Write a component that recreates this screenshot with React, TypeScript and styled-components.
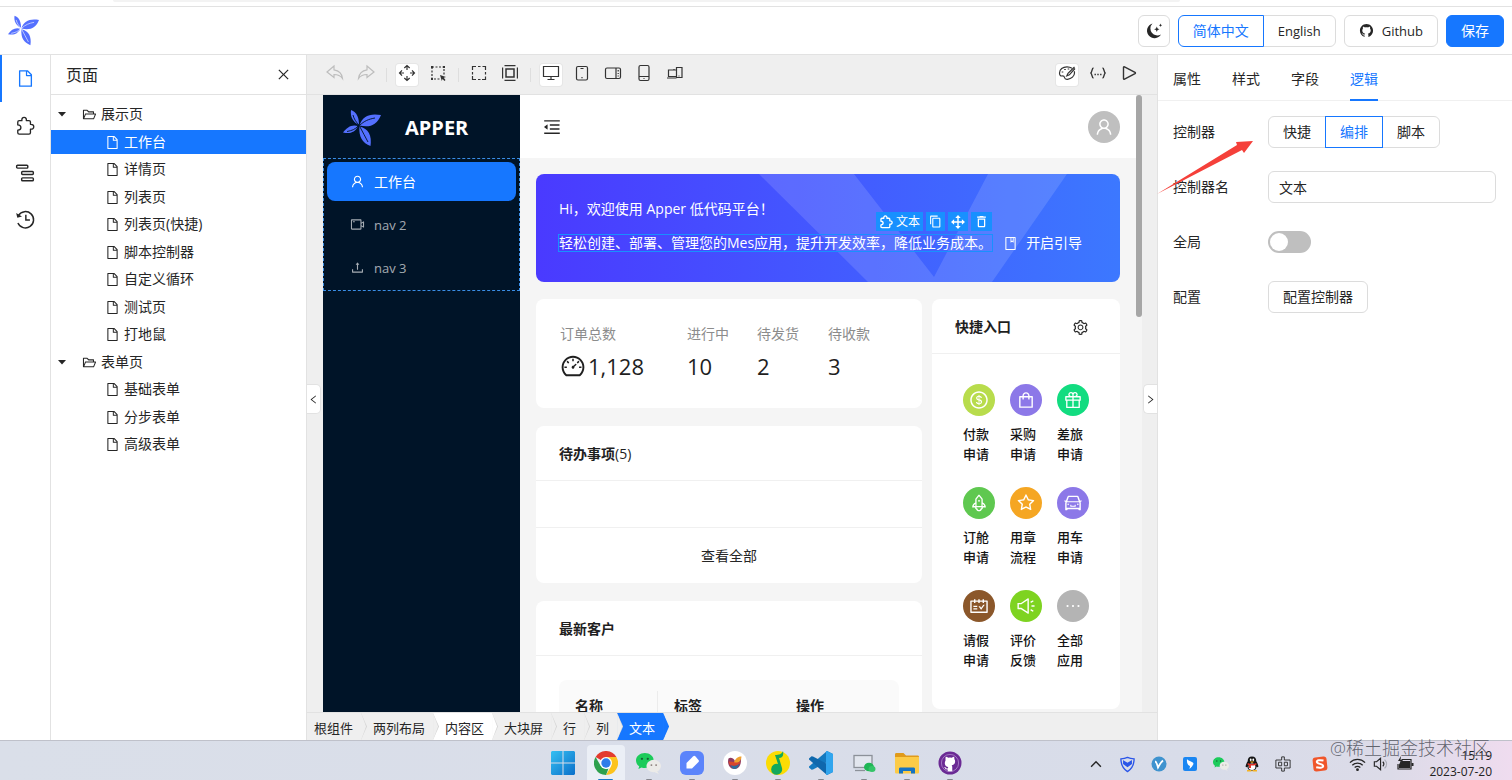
import React from "react";
import styled, { createGlobalStyle, css } from "styled-components";
import {
  AiOutlineBook,
  AiOutlineCar,
  AiOutlineClose,
  AiOutlineDashboard,
  AiOutlineDollar,
  AiOutlineEllipsis,
  AiOutlineFile,
  AiOutlineFolderOpen,
  AiOutlineGift,
  AiOutlineGithub,
  AiOutlineLeft,
  AiOutlineMenuFold,
  AiOutlineRight,
  AiOutlineRocket,
  AiOutlineSchedule,
  AiOutlineSetting,
  AiOutlineShopping,
  AiOutlineSound,
  AiOutlineStar,
  AiOutlineUpload,
  AiOutlineUser,
  AiOutlineVideoCamera,
} from "react-icons/ai";
import { MdContentCopy, MdDeleteOutline } from "react-icons/md";

const blue = "#1677ff";
const line = "#e2e2e2";
const grayBg = "#efefef";

const GlobalStyle = createGlobalStyle`
  *, *::before, *::after { box-sizing: border-box; }
  body {
    margin: 0;
    background: #fff;
    color: #262626;
    font-family: "Open Sans", "Noto Sans CJK SC", sans-serif;
    font-size: 14px;
    line-height: 20px;
  }
  button, input { font: inherit; color: inherit; }
  button { cursor: pointer; padding: 0; }
  ul, ol { list-style: none; margin: 0; padding: 0; }
  h1, h2, p, dl, dd { margin: 0; }
  svg { display: block; flex: none; }
`;

const Shell = styled.div`
  position: relative;
  display: flex;
  flex-direction: column;
  height: 100vh;
  overflow: hidden;
`;

const BrowserEdge = styled.div`
  flex: none;
  height: 7px;
  padding: 0 332px 0 113px;
  border-bottom: 1px solid ${line};
  &::before {
    content: "";
    display: block;
    height: 2px;
    background: #f3f3f3;
    border-radius: 0 0 4px 4px;
  }
`;

/* ---------- header ---------- */

const Header = styled.header`
  flex: none;
  display: flex;
  align-items: center;
  justify-content: space-between;
  height: 48px;
  padding: 0 8px;
  border-bottom: 1px solid ${line};
`;

const HeaderActions = styled.div`
  display: flex;
  gap: 8px;
`;

const Button = styled.button<{ $primary?: boolean; $square?: boolean }>`
  display: flex;
  align-items: center;
  justify-content: center;
  gap: 8px;
  height: 32px;
  padding: 0 ${(p) => (p.$square ? 6 : 14)}px;
  border: 1px solid ${(p) => (p.$primary ? blue : "#dcdcdc")};
  border-radius: 6px;
  background: ${(p) => (p.$primary ? blue : "#fff")};
  color: ${(p) => (p.$primary ? "#fff" : "inherit")};
`;

const Segments = styled.div`
  display: flex;
`;

const Segment = styled.button<{ $active?: boolean }>`
  height: 32px;
  padding: 0 14px;
  border: 1px solid #dcdcdc;
  background: #fff;
  & + & {
    margin-left: -1px;
  }
  &:first-child {
    border-radius: 6px 0 0 6px;
  }
  &:last-child {
    border-radius: 0 6px 6px 0;
  }
  ${(p) =>
    p.$active &&
    css`
      position: relative;
      border-color: ${blue};
      color: ${blue};
    `}
`;

const Latin = styled.span`
  font-size: 13px;
`;

/* ---------- left side ---------- */

const Main = styled.main`
  flex: 1;
  min-height: 0;
  display: flex;
`;

const Rail = styled.nav`
  flex: none;
  width: 51px;
  border-right: 1px solid ${line};
`;

const RailButton = styled.button<{ $active?: boolean }>`
  display: flex;
  align-items: center;
  justify-content: center;
  width: 100%;
  height: 47px;
  border: 0;
  background: none;
  box-shadow: ${(p) => (p.$active ? `inset 2px 0 ${blue}` : "none")};
  color: ${(p) => (p.$active ? blue : "inherit")};
`;

const PagePanel = styled.aside`
  flex: none;
  width: 256px;
  border-right: 1px solid ${line};
`;

const PanelHead = styled.div`
  display: flex;
  align-items: center;
  justify-content: space-between;
  height: 40px;
  padding: 0 15px;
  border-bottom: 1px solid ${line};
`;

const PanelTitle = styled.h2`
  font-size: 16px;
  font-weight: 400;
`;

const IconButton = styled.button`
  display: flex;
  padding: 0;
  border: 0;
  background: none;
`;

const Tree = styled.ul`
  padding-top: 7px;
`;

const TreeItem = styled.li<{ $selected?: boolean; $leaf?: boolean }>`
  display: flex;
  align-items: center;
  height: 24px;
  margin-bottom: 4px;
  padding-left: ${(p) => (p.$leaf ? 54 : 6)}px;
  background: ${(p) => (p.$selected ? blue : "none")};
  color: ${(p) => (p.$selected ? "#fff" : "inherit")};
  &:nth-child(even) {
    margin-bottom: 3px;
  }
`;

const TreeLabel = styled.span`
  padding-left: 4px;
`;

const Caret = styled.svg`
  margin-right: 15px;
`;

/* ---------- canvas ---------- */

const Stage = styled.section`
  position: relative;
  flex: 1;
  min-width: 0;
  display: flex;
  flex-direction: column;
  background: ${grayBg};
`;

const Toolbar = styled.div`
  flex: none;
  display: flex;
  justify-content: space-between;
  align-items: center;
  height: 40px;
  padding: 0 17px;
  border-bottom: 1px solid ${line};
`;

const Tools = styled.div`
  display: flex;
  align-items: center;
  gap: 9px;
`;

const Tool = styled.button<{ $active?: boolean; $muted?: boolean }>`
  display: flex;
  justify-content: center;
  width: 22px;
  height: 22px;
  border: 0;
  border-radius: 3px;
  background: ${(p) => (p.$active ? "#fff" : "none")};
  box-shadow: ${(p) => (p.$active ? "0 0 0 1px #e6e6e6" : "none")};
  color: ${(p) => (p.$muted ? "#bdbdbd" : "#333")};
`;

const ToolDivider = styled.span`
  width: 1px;
  height: 14px;
  background: #dedede;
`;

const Workspace = styled.div`
  flex: 1;
  min-height: 0;
  display: flex;
  padding: 0 15px 0 16px;
`;

const DemoSide = styled.aside`
  flex: none;
  width: 197px;
  background: #001428;
  color: #fff;
`;

const Brand = styled.div`
  display: flex;
  align-items: center;
  gap: 24px;
  height: 63px;
  padding: 2px 0 0 20px;
`;

const BrandName = styled.h1`
  font-size: 20px;
  font-weight: 700;
`;

const DemoMenu = styled.ul`
  display: flex;
  flex-direction: column;
  gap: 4px;
  padding: 3px;
  border: 1px dashed #3a8ee6;
`;

const DemoMenuItem = styled.li<{ $active?: boolean }>`
  display: flex;
  align-items: center;
  gap: 9px;
  height: 39px;
  padding-left: 23px;
  border-radius: 8px;
  background: ${(p) => (p.$active ? blue : "none")};
  color: ${(p) => (p.$active ? "#fff" : "rgba(255, 255, 255, 0.65)")};
`;

const DemoPage = styled.div`
  flex: 1;
  min-width: 0;
  overflow: hidden;
  background: #f5f5f5;
`;

const DemoHeader = styled.div`
  display: flex;
  align-items: center;
  justify-content: space-between;
  height: 63px;
  padding: 0 16px 0 22px;
  background: #fff;
`;

const Round = styled.span<{ $color: string }>`
  display: flex;
  align-items: center;
  justify-content: center;
  width: 32px;
  height: 32px;
  border-radius: 50%;
  background: ${(p) => p.$color};
  color: #fff;
`;

const ScrollTrack = styled.div`
  flex: none;
  width: 6px;
  background: #f5f5f5;
`;

const ScrollThumb = styled.div`
  height: 36%;
  border-radius: 3px;
  background: #a6a6a6;
`;

const DemoBody = styled.div`
  display: grid;
  grid-template-columns: minmax(0, 1fr) 188px;
  gap: 17px 10px;
  align-items: start;
  padding: 16px;
`;

const Banner = styled.section`
  position: relative;
  grid-column: 1 / -1;
  height: 108px;
  padding: 24px 23px;
  overflow: hidden;
  border-radius: 8px;
  background: linear-gradient(90deg, #4a3aff, #3c78ff);
  color: #fff;
`;

const BannerArt = styled.svg`
  position: absolute;
  top: 0;
  right: 0;
`;

const BannerText = styled.p`
  position: relative;
  line-height: 22px;
`;

const BannerRow = styled.div`
  position: relative;
  display: flex;
  align-items: center;
  gap: 11px;
  margin-top: 13px;
`;

const Picked = styled.div`
  position: relative;
  outline: 1px solid #1890ff;
  line-height: 16px;
  white-space: nowrap;
`;

const PickedBar = styled.div`
  position: absolute;
  right: 0;
  bottom: 100%;
  display: flex;
  gap: 3px;
  margin-bottom: 4px;
`;

const PickedAction = styled.button`
  display: flex;
  align-items: center;
  gap: 3px;
  height: 19px;
  padding: 0 3px;
  border: 0;
  background: #1890ff;
  color: #fff;
  font-size: 12px;
`;

const GuideLink = styled.a`
  display: flex;
  align-items: center;
  gap: 8px;
  color: #fff;
  text-decoration: none;
  white-space: nowrap;
`;

const Column = styled.div`
  display: flex;
  flex-direction: column;
  gap: 18px;
`;

const Card = styled.section`
  border-radius: 8px;
  background: #fff;
`;

const CardHead = styled.div`
  display: flex;
  align-items: center;
  justify-content: space-between;
  height: 55px;
  padding: 2px 31px 0 23px;
  border-bottom: 1px solid #f0f0f0;
`;

const CardTitle = styled.h2`
  font-size: 14px;
  font-weight: 700;
  color: #1f1f1f;
`;

const Count = styled.span`
  font-weight: 500;
`;

const Stats = styled.dl`
  display: grid;
  grid-template-columns: 127px 70px 71px 1fr;
  height: 109px;
  padding: 24px;
`;

const StatLabel = styled.dt`
  line-height: 22px;
  color: #8c8c8c;
`;

const StatValue = styled.dd`
  display: flex;
  align-items: center;
  gap: 2px;
  margin-top: 6px;
  font-size: 22px;
  line-height: 30px;
  color: #1f1f1f;
`;

const EmptyBody = styled.div`
  height: 47px;
  border-bottom: 1px solid #f0f0f0;
`;

const ViewAll = styled.button`
  display: block;
  width: 100%;
  height: 55px;
  border: 0;
  background: none;
`;

const TableWrap = styled.div`
  padding: 24px 23px;
`;

const Table = styled.table`
  width: 100%;
  border-collapse: collapse;
  table-layout: fixed;
  background: #fafafa;
  border-radius: 8px;
  th {
    position: relative;
    height: 52px;
    padding: 0 16px;
    text-align: left;
    font-weight: 700;
    color: #1f1f1f;
  }
  th:nth-child(1) {
    width: 99px;
  }
  th:nth-child(1)::after {
    content: "";
    position: absolute;
    top: 11px;
    right: 0;
    bottom: 11px;
    width: 1px;
    background: #ececec;
  }
  th:nth-child(2) {
    width: 122px;
  }
`;

const Shortcuts = styled.ul`
  display: grid;
  grid-template-columns: repeat(3, 32px);
  gap: 22px 15px;
  padding: 30px 31px 38px;
`;

const ShortcutLabel = styled.span`
  display: block;
  width: 28px;
  margin-top: 8px;
  font-size: 13px;
  font-weight: 500;
  line-height: 20px;
  color: #141414;
`;

const Shortcut = styled.li`
  height: 81px;
`;

const Handle = styled.button<{ $side: "left" | "right" }>`
  position: absolute;
  top: 329px;
  ${(p) => p.$side}: 0;
  display: flex;
  align-items: center;
  justify-content: center;
  width: 14px;
  height: 30px;
  border: 1px solid ${line};
  border-${(p) => p.$side}: 0;
  border-radius: ${(p) => (p.$side === "left" ? "0 5px 5px 0" : "5px 0 0 5px")};
  background: #fff;
`;

const Trail = styled.ol`
  flex: none;
  display: flex;
  height: 28px;
  border-top: 1px solid ${line};
`;

const TrailItem = styled.li<{ $tone: string; $current?: boolean }>`
  position: relative;
  display: flex;
  align-items: center;
  padding: 2px 8px 0 12px;
  font-size: 13px;
  background: ${(p) => p.$tone};
  color: ${(p) => (p.$current ? "#fff" : "inherit")};
  &:first-child {
    padding-left: 7px;
  }
  &::before,
  &::after {
    content: "";
    position: absolute;
    z-index: 1;
    top: 0;
    left: 100%;
    width: 5px;
    height: 100%;
    background: ${(p) => p.$tone};
    clip-path: polygon(0 0, 100% 50%, 0 100%);
  }
  &::before {
    width: 6px;
    background: ${(p) => (p.$current ? blue : "#d6d6d6")};
  }
`;

/* ---------- right panel ---------- */

const Inspector = styled.aside`
  position: relative;
  flex: none;
  width: 355px;
  border-left: 1px solid ${line};
`;

const Tabs = styled.div`
  display: flex;
  gap: 31px;
  height: 46px;
  padding-left: 15px;
  border-bottom: 1px solid #f0f0f0;
`;

const Tab = styled.button<{ $active?: boolean }>`
  height: 46px;
  padding-top: 3px;
  border: 0;
  border-bottom: 2px solid ${(p) => (p.$active ? blue : "transparent")};
  background: none;
  color: ${(p) => (p.$active ? blue : "inherit")};
`;

const Form = styled.form`
  display: flex;
  flex-direction: column;
  gap: 23px;
  padding: 15px 16px 0 15px;
`;

const Field = styled.div`
  display: grid;
  grid-template-columns: 95px minmax(0, 1fr);
  align-items: center;
  justify-items: start;
  height: 32px;
`;

const TextInput = styled.input`
  width: 100%;
  height: 32px;
  padding: 0 10px;
  border: 1px solid #dcdcdc;
  border-radius: 6px;
  background: #fff;
`;

const Switch = styled.input`
  appearance: none;
  display: flex;
  width: 43px;
  height: 22px;
  margin: 0;
  padding: 2px;
  border-radius: 11px;
  background: #bfbfbf;
  &::before {
    content: "";
    width: 18px;
    height: 18px;
    border-radius: 50%;
    background: #fff;
  }
  &:checked {
    justify-content: flex-end;
    background: ${blue};
  }
`;

const Pointer = styled.svg`
  position: absolute;
  top: 85px;
  left: -1px;
  pointer-events: none;
`;

/* ---------- taskbar ---------- */

const Taskbar = styled.footer`
  flex: none;
  display: grid;
  grid-template-columns: 1fr auto 1fr;
  height: 40px;
  border-top: 1px solid #bfc1ca;
  background: linear-gradient(90deg, #dadfe9 0%, #d8dce9 80%, #dcdbe8 92%, #efdcef 100%);
`;

const Apps = styled.div`
  grid-column: 2;
  display: flex;
  gap: 5px;
`;

const AppButton = styled.button<{ $mark?: "open" | "front" }>`
  position: relative;
  display: flex;
  justify-content: center;
  width: 38px;
  height: 36px;
  margin-top: 4px;
  padding-top: 6px;
  border: 0;
  border-radius: 4px 4px 0 0;
  background: ${(p) => (p.$mark === "front" ? "#ebeff6" : "none")};
  ${(p) =>
    p.$mark &&
    css`
      &::after {
        content: "";
        position: absolute;
        bottom: 0;
        width: ${p.$mark === "front" ? 15 : 6}px;
        height: 2px;
        border-radius: 1px;
        background: ${p.$mark === "front" ? "#1a78c8" : "#85878f"};
      }
    `}
`;

const Tray = styled.div`
  display: flex;
  align-items: center;
  justify-content: flex-end;
  gap: 15px;
  padding: 6px 20px 0 0;
`;

const TrayGroup = styled.div`
  display: flex;
  align-items: center;
  gap: 7px;
  margin-left: 5px;
`;

const Clock = styled.time`
  display: flex;
  flex-direction: column;
  align-items: flex-end;
  font-size: 12px;
  line-height: 16px;
  color: #222;
`;

const Watermark = styled.div`
  position: absolute;
  right: 22px;
  bottom: 20px;
  font-size: 18px;
  font-weight: 300;
  line-height: 24px;
  color: rgba(75, 78, 88, 0.85);
  pointer-events: none;
`;

/* ---------- drawings ---------- */

const Logo = ({ size, vein }: { size: number; vein: string }) => (
  <svg width={size} height={size} viewBox="0 0 38 38" aria-hidden="true">
    <g fill="#5470ff">
      <path d="M8 1c6 2 8 8 8 15C10 13 7 8 8 1Z" />
      <path d="M38 6C34 16 27 19 16.500 16.500 19 7 27 4 38 6Z" />
      <path d="M15 17C9 15 4 18 0 23.500c7 1.500 12 0 15-6.500Z" />
      <path d="M16.500 17.500c9 2 12.500 9 11 19.500-8-3-12-9-11-19.500Z" />
    </g>
    <g fill="none" stroke={vein} strokeWidth="0.900">
      <path d="M10 6c1 4 3 7 6 10M32 9c-6 1-11 3-15.500 7.500M4 22.500c5-1 8-2 11-5.500M17 18c3 5 5 10 8 15" />
    </g>
  </svg>
);

const Draw = ({ children, size = 18, w = 1.2 }: { children: React.ReactNode; size?: number; w?: number }) => (
  <svg
    width={size}
    height={size}
    viewBox="0 0 18 18"
    fill="none"
    stroke="currentColor"
    strokeWidth={w}
    aria-hidden="true"
  >
    {children}
  </svg>
);

const Puzzle = ({ size, w }: { size: number; w?: number }) => (
  <Draw size={size} w={w}>
    <path
      strokeLinejoin="round"
      d="M2.500 5.500c0-.8.500-1.300 1.300-1.300h2.400c-.3-1.800.6-3 2-3s2.300 1.200 2 3h2.400c.8 0 1.300.5 1.300 1.300v2c1.800-.2 3 .7 3 2.200s-1.200 2.400-3 2.100V15c0 .8-.5 1.300-1.300 1.300H3.800c-.8 0-1.300-.5-1.300-1.300v-2.200c2-.1 2.800-1.200 2.800-2.400S4.500 8.100 2.500 8Z"
    />
  </Draw>
);

const HistoryIcon = () => (
  <Draw size={21} w={1.25}>
    <path d="M3 5.500A7 7 0 1 1 2.500 12M9.300 5v4.500h3.500" />
    <path d="M1 3.500 2 7.500l4-1Z" fill="currentColor" stroke="none" />
  </Draw>
);

const MoveIcon = () => (
  <Draw size={14} w={1.8}>
    <path d="M9 3v12M3 9h12" />
    <path d="m9 0 3.500 4h-7zM9 18l3.500-4h-7zM0 9l4-3.500v7zM18 9l-4-3.500v7z" fill="currentColor" stroke="none" />
  </Draw>
);

const undoPath = "M8 2 1 8l7 5.500V10.500c4 0 6.500 1.200 8.500 4C16 10 13 6.500 8 5.800Z";

const toolGroups: { name: string; active?: boolean; muted?: boolean; art: React.ReactNode }[][] = [
  [
    { name: "撤销", muted: true, art: <path d={undoPath} /> },
    { name: "重做", muted: true, art: <path transform="matrix(-1 0 0 1 18 0)" d={undoPath} /> },
  ],
  [
    {
      name: "移动",
      active: true,
      art: <path d="M6.300 4 9 1.500 11.700 4M6.300 14 9 16.500 11.700 14M4 6.300 1.500 9 4 11.700M14 6.300 16.500 9 14 11.700M9 2v4M9 12v4M2 9h4M12 9h4" />,
    },
    {
      name: "框选",
      art: (
        <>
          <path strokeDasharray="2 1.500" d="M3 3h12v8M3 3v12h8" />
          <path fill="currentColor" stroke="none" d="M2 2h2v2H2zM14 2h2v2h-2zM2 14h2v2H2zM11 11l6 2-2.200.8L16.500 16l-1 1-2-2-.7 2z" />
        </>
      ),
    },
  ],
  [
    { name: "轮廓", art: <path d="M2.500 6V2.500H6M8 2.500h2.500M12.500 2.500h3V6M15.500 8v2.500M15.500 12.500v3H12M10.500 15.500H8M6 15.500H2.500V12M2.500 10.500V8" /> },
    {
      name: "边距",
      art: (
        <>
          <path d="M5 5h8v8H5z" strokeWidth="1.500" />
          <path d="M3.500 1.600h11M3.500 16.400h11M1.600 3.500v11M16.400 3.500v11" />
        </>
      ),
    },
  ],
  [
    { name: "桌面", active: true, art: <path d="M1.500 2.500h15v10h-15zM9 12.500v3M5.500 15.500h7" /> },
    {
      name: "平板",
      art: (
        <>
          <rect x="3.500" y="2.500" width="11" height="13.500" rx="1.500" />
          <path d="M7.500 4.500h3M9 13v1.200" />
        </>
      ),
    },
    {
      name: "平板横屏",
      art: (
        <>
          <rect x="1.500" y="4" width="15" height="10.500" rx="1.500" />
          <path d="M12 4v10.500M14.200 6v1.500M14.200 9v1M14.200 11.500v1" />
        </>
      ),
    },
    {
      name: "手机",
      art: (
        <>
          <rect x="4" y="1.500" width="10" height="15" rx="1.500" />
          <path d="M4 12.500h10M8.500 14.500h1" />
        </>
      ),
    },
    {
      name: "多设备",
      art: (
        <>
          <path d="M10.500 12.500H2.500V6H10.500M1 14h9.500M8 6V5" />
          <path d="M10.500 6V3.500h5.500V13.500h-5.500z" />
          <path d="M12.500 12h1" />
        </>
      ),
    },
  ],
];

const WindowsIcon = () => (
  <svg width="24" height="24" viewBox="0 0 24 24" aria-hidden="true">
    <defs>
      <linearGradient id="win" x1="0" y1="0" x2="1" y2="1">
        <stop offset="0" stopColor="#35c0f2" />
        <stop offset="1" stopColor="#0a6fca" />
      </linearGradient>
    </defs>
    <path fill="url(#win)" d="M1 0h10.500v11.500H0V1zM12.500 0H23l1 1v10.500H12.500zM0 12.500h11.500V24H1l-1-1zM12.500 12.500H24V23l-1 1H12.500z" />
  </svg>
);

const ChromeIcon = () => (
  <svg width="24" height="24" viewBox="0 0 24 24" aria-hidden="true">
    <path fill="#e33b2e" d="M12 12 1.600 6A12 12 0 0 1 22.400 6Z" />
    <path fill="#fcc31e" d="M12 6h10.400A12 12 0 0 1 12 24l5.200-9Z" />
    <path fill="#2da04d" d="M1.600 6 6.800 15 12 18l2.500-.5L12 24A12 12 0 0 1 1.600 6Z" />
    <circle cx="12" cy="12" r="6" fill="#fff" />
    <circle cx="12" cy="12" r="4.700" fill="#2f7de9" />
  </svg>
);

const WechatIcon = ({ size }: { size: number }) => (
  <svg width={size} height={size} viewBox="0 0 24 24" aria-hidden="true">
    <path fill="#1ccb5b" d="M8.500 2C3.800 2 0 5.200 0 9.200c0 2.200 1.200 4.200 3.100 5.500l-.8 2.600 3-1.500c1 .3 2.100.5 3.200.5 4.700 0 8.500-3.200 8.500-7.100S13.200 2 8.500 2Z" />
    <ellipse cx="17" cy="14.500" rx="7" ry="6" fill="#ecebe8" />
    <path fill="#ecebe8" d="m20 19 2 3-4-1.500z" />
    <g fill="#155e34">
      <circle cx="5.700" cy="7.500" r="1.100" />
      <circle cx="11.300" cy="7.500" r="1.100" />
    </g>
    <g fill="#8b7f7a">
      <circle cx="14.800" cy="13.500" r="0.900" />
      <circle cx="19.300" cy="13.500" r="0.900" />
    </g>
  </svg>
);

const NoteIcon = () => (
  <svg width="24" height="24" viewBox="0 0 24 24" aria-hidden="true">
    <rect width="24" height="24" rx="6" fill="#5b84fb" />
    <path fill="#fff" d="M6.500 17.500V12L13 5.500c1-1 1.500-1 2.500 0L18.500 9c.6.8.6 1.200 0 2l-6.500 6.500Z" />
  </svg>
);

const BirdIcon = () => (
  <svg width="24" height="24" viewBox="0 0 24 24" aria-hidden="true">
    <circle cx="12" cy="12" r="12" fill="#fff" />
    <path fill="#8e3b62" d="M5.500 7.500c2-1.500 5-.5 6.500 2.500l6-4c.5 6-1 12-6.500 12S4 12 5.500 7.500Z" />
    <path fill="#f0a02e" d="M11 11c2-4 4-5.500 7.500-5.500-.5 4.500-3 7-7.500 7.500Z" />
    <path fill="#d8452e" d="M5.500 10.500c4-.5 7 2 12 .5-1 3.500-7 5-11 2.500Z" />
    <path fill="#2f6d9c" d="M8 14.500c3 1 6 .5 8-1.500-.5 3.500-2.500 5-4.500 5s-3-1.500-3.500-3.500Z" />
  </svg>
);

const MusicIcon = () => (
  <svg width="24" height="24" viewBox="0 0 24 24" aria-hidden="true">
    <circle cx="12" cy="12" r="12" fill="#fbdc05" />
    <path fill="#13a85c" d="M17 0c-1 3-4 4-8 4l3 9a5.500 5.500 0 1 0 4 4L13 7c3 0 5-2 4-7Z" />
  </svg>
);

const CodeIcon = () => (
  <svg width="24" height="24" viewBox="0 0 24 24" aria-hidden="true">
    <path fill="#1479bf" d="m18 0 6 3v5L4 18.500l-1.500.2L0 16.500v-1Z" />
    <path fill="#0f68ad" d="M0 8.500v-1l2.500-2.200 1.500.2L24 16v5l-6 3Z" />
    <path fill="#31a5ee" d="m18 0 6 3v18l-6 3c-.8.100-1-.3-1-1V1c0-.7.200-1.100 1-1Z" />
  </svg>
);

const RemoteIcon = () => (
  <svg width="24" height="24" viewBox="0 0 24 24" aria-hidden="true">
    <rect x="2" y="4.500" width="18" height="12" fill="#e2e6ee" stroke="#8c9199" strokeWidth="1.300" />
    <path stroke="#8c9199" strokeWidth="1.300" d="M3 19.500h10" />
    <ellipse cx="17" cy="16" rx="5" ry="4.300" fill="#1fb655" />
    <ellipse cx="20" cy="18" rx="3.500" ry="3" fill="#34c468" />
  </svg>
);

const FolderIcon = () => (
  <svg width="24" height="24" viewBox="0 0 24 24" aria-hidden="true">
    <path fill="#e09a1b" d="M0 3.500C0 2.500.5 2 1.500 2h7L11 4.500h11.500c1 0 1.500.5 1.500 1.500v4H0Z" />
    <path fill="#fccb47" d="M0 6h24v15c0 1-.5 1.500-1.500 1.500h-21C.5 22.500 0 22 0 21Z" />
    <path fill="#1673c2" d="M4 22.500V18c0-1 .5-1.500 1.500-1.500h13c1 0 1.500.5 1.500 1.500v4.500h-4V20H8v2.500Z" />
  </svg>
);

const GithubAppIcon = () => (
  <svg width="24" height="24" viewBox="0 0 24 24" aria-hidden="true">
    <circle cx="12" cy="12" r="11.500" fill="#6b2a94" />
    <svg x="3" y="3" width="18" height="18" viewBox="0 0 24 24">
      <circle cx="12" cy="12" r="11.500" fill="none" stroke="#b48fd0" />
      <path fill="#fff" d="M6 6c0-1.500.3-2 .6-2.300 1 .1 2 .7 3 1.400a9 9 0 0 1 4.800 0c1-.7 2-1.300 3-1.400.5 1 .5 2 .3 3 1 1.200 1.300 2.400 1 4.300-.4 2.500-2 3.600-4.500 4 .5.600.8 1.200.8 2.200V23h-6v-2.500c-2 .4-3-.3-3.600-1.500-.4-.8-.9-1.200-1.400-1.700 1.500-.3 2.200.6 2.800 1.400.5.700 1.100.9 2.200.6.100-.9.300-1.500.7-2-2.500-.4-4.100-1.500-4.500-4-.3-1.900 0-3.100.8-4.300Z" />
    </svg>
  </svg>
);

const apps: { name: string; mark?: "open" | "front"; icon: React.ReactNode }[] = [
  { name: "开始", icon: <WindowsIcon /> },
  { name: "Chrome", mark: "front", icon: <ChromeIcon /> },
  { name: "微信", mark: "open", icon: <WechatIcon size={25} /> },
  { name: "笔记", mark: "open", icon: <NoteIcon /> },
  { name: "Navicat", mark: "open", icon: <BirdIcon /> },
  { name: "QQ音乐", mark: "open", icon: <MusicIcon /> },
  { name: "VS Code", mark: "open", icon: <CodeIcon /> },
  { name: "远程", mark: "open", icon: <RemoteIcon /> },
  { name: "文件夹", mark: "open", icon: <FolderIcon /> },
  { name: "GitHub", mark: "open", icon: <GithubAppIcon /> },
];

const ShieldIcon = () => (
  <Draw size={17} w={1.4}>
    <g stroke="#2a55e8">
      <path d="M9 1.500c2 1 4.500 1.500 7 1.500 0 6-1.500 10-7 13.500C3.500 13 2 9 2 3c2.500 0 5-.5 7-1.500Z" />
      <path d="m5 5.500 4 2.500 4-2.500v2.500L9 11 5 8Z" fill="#2a55e8" />
    </g>
  </Draw>
);

const VpnIcon = () => (
  <svg width="16" height="16" viewBox="0 0 16 16" aria-hidden="true">
    <circle cx="8" cy="8" r="7.500" fill="#3f93cf" />
    <path fill="none" stroke="#fff" strokeWidth="1.800" d="M4 5.500c1.500 0 2 2.500 3 6 1.500-2.500 2.500-5 5-7" />
  </svg>
);

const DingIcon = () => (
  <svg width="16" height="16" viewBox="0 0 16 16" aria-hidden="true">
    <rect x="1" y="1" width="14" height="14" rx="2" fill="#1a86f2" />
    <path fill="#fff" d="M5 3c1 2 6 2.500 6.500 4.500 0 1-1 2-1.500 3L7.500 13l.5-3C6 9.500 4.500 7 5 3Z" />
  </svg>
);

const PenguinIcon = () => (
  <svg width="16" height="16" viewBox="0 0 16 16" aria-hidden="true">
    <path fill="#141414" d="M8 .5c3 0 4.300 2 4.300 4.800 1 1.700 2.200 3.500 2 5.700-.6.400-1.200 0-1.600-.6-.6 3-2 4.300-4.700 4.300S3.900 13.400 3.300 10.400c-.4.600-1 1-1.600.6-.2-2.200 1-4 2-5.700C3.700 2.500 5 .5 8 .5Z" />
    <ellipse cx="8" cy="10.800" rx="3.400" ry="3.300" fill="#fff" />
    <ellipse cx="6.700" cy="3.700" rx="0.900" ry="1.200" fill="#fff" />
    <ellipse cx="9.300" cy="3.700" rx="0.900" ry="1.200" fill="#fff" />
    <path fill="#f5b324" d="M5.500 5.600h5L8 6.900zM3 14h4.500v1.600H3zM8.500 14H13v1.600H8.500z" />
    <path fill="#e0342b" d="M3.800 7c2.800 1.200 5.600 1.200 8.400 0l.3 1.700c-2 .8-4 1-5.500.9V12H5V9.300l-1.500-.6Z" />
  </svg>
);

const SogouIcon = () => (
  <svg width="18" height="18" viewBox="0 0 18 18" aria-hidden="true">
    <rect x="2" y="2" width="14" height="14" rx="3" fill="#f0562b" transform="rotate(-6 9 9)" />
    <path fill="none" stroke="#fff" strokeWidth="2" d="M12.500 5.500C9 4.800 5.800 5 5.800 7c0 2.200 6.400 1.500 6.400 4 0 2-4 2-7 1.300" />
  </svg>
);

const moonPath = "M7.500 1.500A7.500 7.500 0 1 0 16 12.500 7 7 0 0 1 7.500 1.500Z";

/* ---------- data ---------- */

const tree: { label: string; leaf?: boolean; selected?: boolean }[] = [
  { label: "展示页" },
  { label: "工作台", leaf: true, selected: true },
  { label: "详情页", leaf: true },
  { label: "列表页", leaf: true },
  { label: "列表页(快捷)", leaf: true },
  { label: "脚本控制器", leaf: true },
  { label: "自定义循环", leaf: true },
  { label: "测试页", leaf: true },
  { label: "打地鼠", leaf: true },
  { label: "表单页" },
  { label: "基础表单", leaf: true },
  { label: "分步表单", leaf: true },
  { label: "高级表单", leaf: true },
];

const stats = [
  { label: "订单总数", value: "1,128", icon: <AiOutlineDashboard size={26} /> },
  { label: "进行中", value: "10" },
  { label: "待发货", value: "2" },
  { label: "待收款", value: "3" },
];

const shortcuts = [
  { label: "付款申请", color: "#b8dc4c", Icon: AiOutlineDollar },
  { label: "采购申请", color: "#8c78e8", Icon: AiOutlineShopping },
  { label: "差旅申请", color: "#12dc80", Icon: AiOutlineGift },
  { label: "订舱申请", color: "#5fc850", Icon: AiOutlineRocket },
  { label: "用章流程", color: "#f5a623", Icon: AiOutlineStar },
  { label: "用车申请", color: "#8c78e8", Icon: AiOutlineCar },
  { label: "请假申请", color: "#8b572a", Icon: AiOutlineSchedule },
  { label: "评价反馈", color: "#7ed321", Icon: AiOutlineSound },
  { label: "全部应用", color: "#b4b4b4", Icon: AiOutlineEllipsis },
];

const trail = ["根组件", "两列布局", "内容区", "大块屏", "行", "列", "文本"];

const trailTone = (name: string) => (name === "文本" ? blue : name === "内容区" ? "#ffffff" : grayBg);

export default function App() {
  return (
    <>
      <GlobalStyle />
      <Shell>
        <BrowserEdge />
        <Header>
          <Logo size={31} vein="#dfe5ff" />
          <HeaderActions>
            <Button $square aria-label="深色模式">
              <Draw>
                <path d={moonPath} fill="currentColor" stroke="none" />
                <path d="m11.800 4.500.8 1.900 1.900.8-1.900.8-.8 1.900-.8-1.900-1.900-.8 1.900-.8zM15.500 1.500l.5 1.200 1.200.5-1.200.5-.5 1.200-.5-1.200-1.200-.5 1.200-.5z" fill="currentColor" stroke="none" />
              </Draw>
            </Button>
            <Segments>
              <Segment $active>简体中文</Segment>
              <Segment>
                <Latin>English</Latin>
              </Segment>
            </Segments>
            <Button>
              <AiOutlineGithub size={15} />
              <Latin>Github</Latin>
            </Button>
            <Button $primary>保存</Button>
          </HeaderActions>
        </Header>

        <Main>
          <Rail>
            <RailButton $active aria-label="页面">
              <AiOutlineFile size={19} />
            </RailButton>
            <RailButton aria-label="组件">
              <Puzzle size={20} />
            </RailButton>
            <RailButton aria-label="大纲">
              <Draw size={20} w={1.3}>
                <rect x="1.500" y="2" width="10" height="2.600" rx="0.800" />
                <rect x="6" y="7.700" width="10.500" height="2.600" rx="0.800" />
                <rect x="6" y="13.400" width="10.500" height="2.600" rx="0.800" />
              </Draw>
            </RailButton>
            <RailButton aria-label="历史">
              <HistoryIcon />
            </RailButton>
          </Rail>

          <PagePanel>
            <PanelHead>
              <PanelTitle>页面</PanelTitle>
              <IconButton aria-label="关闭">
                <AiOutlineClose size={15} />
              </IconButton>
            </PanelHead>
            <Tree>
              {tree.map((node) => (
                <TreeItem key={node.label} $leaf={node.leaf} $selected={node.selected}>
                  {!node.leaf && (
                    <Caret width="10" height="10" viewBox="0 0 10 10" aria-hidden="true">
                      <path d="M1 3h8L5 7.500z" fill="currentColor" />
                    </Caret>
                  )}
                  {node.leaf ? <AiOutlineFile size={15} /> : <AiOutlineFolderOpen size={15} />}
                  <TreeLabel>{node.label}</TreeLabel>
                </TreeItem>
              ))}
            </Tree>
          </PagePanel>

          <Stage>
            <Toolbar>
              <Tools>
                {toolGroups.map((group, i) => (
                  <React.Fragment key={group[0].name}>
                    {i > 0 && <ToolDivider />}
                    {group.map((tool) => (
                      <Tool key={tool.name} $active={tool.active} $muted={tool.muted} aria-label={tool.name}>
                        <Draw>{tool.art}</Draw>
                      </Tool>
                    ))}
                  </React.Fragment>
                ))}
              </Tools>
              <Tools>
                <Tool $active aria-label="主题">
                  <Draw>
                    <path d="M14 4.200C12.500 3.200 11 2.800 9 2.800 4.800 2.800 1.500 5.500 1.500 9c0 2 1 3.200 2.500 3 1.500-.2 2.300.3 2.500 1.500.3 1.500 1.200 2 3 1.800 4-.5 7-3.300 7-6.300 0-.8-.1-1.300-.3-1.800" />
                    <path d="M16.500 3 10 9.300l-1.200 2.500 2.600-1L17 4.500" />
                    <path d="M4.500 7.500v1M7 5v1M10.500 4.500v1" strokeWidth="1.600" />
                  </Draw>
                </Tool>
                <Tool aria-label="变量">
                  <Draw w={1.4}>
                    <path d="M4.500 4C2.500 4 3.500 8.500 1.500 9c2 .5 1 5 3 5M13.500 4c2 0 1 4.500 3 5-2 .5-1 5-3 5" />
                    <path d="M5.500 10.500h1.400M8.300 10.500h1.400M11.100 10.500h1.400" />
                  </Draw>
                </Tool>
                <Tool aria-label="预览">
                  <Draw w={1.4}>
                    <path d="M3.500 3.500c0-.7.400-1 1-.7l10.500 5.500c.6.400.6 1 0 1.400L4.500 15.200c-.6.300-1 0-1-.7Z" />
                  </Draw>
                </Tool>
              </Tools>
            </Toolbar>

            <Workspace>
              <DemoSide>
                <Brand>
                  <Logo size={38} vein="#001428" />
                  <BrandName>APPER</BrandName>
                </Brand>
                <DemoMenu>
                  <DemoMenuItem $active>
                    <AiOutlineUser size={15} />
                    工作台
                  </DemoMenuItem>
                  <DemoMenuItem>
                    <AiOutlineVideoCamera size={15} />
                    <Latin>nav 2</Latin>
                  </DemoMenuItem>
                  <DemoMenuItem>
                    <AiOutlineUpload size={15} />
                    <Latin>nav 3</Latin>
                  </DemoMenuItem>
                </DemoMenu>
              </DemoSide>

              <DemoPage>
                <DemoHeader>
                  <AiOutlineMenuFold size={20} />
                  <Round $color="#bfbfbf">
                    <AiOutlineUser size={20} />
                  </Round>
                </DemoHeader>
                <DemoBody>
                  <Banner>
                    <BannerArt width="361" height="108" viewBox="0 0 361 108" aria-hidden="true">
                      <path fill="#fff" fillOpacity="0.13" d="M0 0h95l80 103L229 0h79l-75 108H109Z" />
                    </BannerArt>
                    <BannerText>Hi，欢迎使用 Apper 低代码平台！</BannerText>
                    <BannerRow>
                      <Picked>
                        轻松创建、部署、管理您的Mes应用，提升开发效率，降低业务成本。
                        <PickedBar>
                          <PickedAction>
                            <Puzzle size={14} w={1.7} />
                            文本
                          </PickedAction>
                          <PickedAction aria-label="复制">
                            <MdContentCopy size={13} />
                          </PickedAction>
                          <PickedAction aria-label="移动">
                            <MoveIcon />
                          </PickedAction>
                          <PickedAction aria-label="删除">
                            <MdDeleteOutline size={15} />
                          </PickedAction>
                        </PickedBar>
                      </Picked>
                      <GuideLink href="#guide">
                        <AiOutlineBook size={15} />
                        开启引导
                      </GuideLink>
                    </BannerRow>
                  </Banner>

                  <Column>
                    <Card>
                      <Stats>
                        {stats.map((s) => (
                          <div key={s.label}>
                            <StatLabel>{s.label}</StatLabel>
                            <StatValue>
                              {s.icon}
                              {s.value}
                            </StatValue>
                          </div>
                        ))}
                      </Stats>
                    </Card>
                    <Card>
                      <CardHead>
                        <CardTitle>
                          待办事项<Count>(5)</Count>
                        </CardTitle>
                      </CardHead>
                      <EmptyBody />
                      <ViewAll>查看全部</ViewAll>
                    </Card>
                    <Card>
                      <CardHead>
                        <CardTitle>最新客户</CardTitle>
                      </CardHead>
                      <TableWrap>
                        <Table>
                          <thead>
                            <tr>
                              <th>名称</th>
                              <th>标签</th>
                              <th>操作</th>
                            </tr>
                          </thead>
                        </Table>
                      </TableWrap>
                    </Card>
                  </Column>

                  <Card>
                    <CardHead>
                      <CardTitle>快捷入口</CardTitle>
                      <AiOutlineSetting size={17} />
                    </CardHead>
                    <Shortcuts>
                      {shortcuts.map(({ label, color, Icon }) => (
                        <Shortcut key={label}>
                          <Round $color={color}>
                            <Icon size={20} />
                          </Round>
                          <ShortcutLabel>{label}</ShortcutLabel>
                        </Shortcut>
                      ))}
                    </Shortcuts>
                  </Card>
                </DemoBody>
              </DemoPage>
              <ScrollTrack>
                <ScrollThumb />
              </ScrollTrack>
            </Workspace>

            <Handle $side="left" aria-label="收起左侧">
              <AiOutlineLeft size={11} />
            </Handle>
            <Handle $side="right" aria-label="收起右侧">
              <AiOutlineRight size={11} />
            </Handle>

            <Trail>
              {trail.map((name) => (
                <TrailItem key={name} $tone={trailTone(name)} $current={name === "文本"}>
                  {name}
                </TrailItem>
              ))}
            </Trail>
          </Stage>

          <Inspector>
            <Tabs>
              <Tab>属性</Tab>
              <Tab>样式</Tab>
              <Tab>字段</Tab>
              <Tab $active>逻辑</Tab>
            </Tabs>
            <Form onSubmit={(e) => e.preventDefault()}>
              <Field>
                <span id="controller">控制器</span>
                <Segments role="group" aria-labelledby="controller">
                  <Segment type="button">快捷</Segment>
                  <Segment type="button" $active>
                    编排
                  </Segment>
                  <Segment type="button">脚本</Segment>
                </Segments>
              </Field>
              <Field>
                <label htmlFor="controller-name">控制器名</label>
                <TextInput id="controller-name" type="text" defaultValue="文本" />
              </Field>
              <Field>
                <label htmlFor="global">全局</label>
                <Switch id="global" type="checkbox" role="switch" />
              </Field>
              <Field>
                <label htmlFor="configure">配置</label>
                <Button id="configure" type="button">
                  配置控制器
                </Button>
              </Field>
            </Form>
            <Pointer width="98" height="56" viewBox="0 0 98 56" aria-hidden="true">
              <path fill="#f5403a" d="m0 54 80-49-1-3 17-1-9 12-2-3Z" />
            </Pointer>
          </Inspector>
        </Main>

        <Taskbar>
          <Apps>
            {apps.map((app) => (
              <AppButton key={app.name} $mark={app.mark} aria-label={app.name}>
                {app.icon}
              </AppButton>
            ))}
          </Apps>
          <Tray>
            <Draw size={16} w={1.6}>
              <path d="m3.500 12 5.500-5.500 5.500 5.500" />
            </Draw>
            <ShieldIcon />
            <VpnIcon />
            <DingIcon />
            <WechatIcon size={16} />
            <PenguinIcon />
            <Draw size={16} w={1}>
              <path d="M7.500 1h3v3.500H17v9h-6.500V17h-3v-3.500H1v-9h6.500ZM4 7h3.500v4H4ZM10.500 7H14v4h-3.500Z" />
            </Draw>
            <TrayGroup>
              <SogouIcon />
            </TrayGroup>
            <TrayGroup>
              <Draw size={17} w={1.4}>
                <path d="M1 7c4.500-4.500 11.500-4.500 16 0M3.500 9.800c3-3 8-3 11 0M6 12.300c1.700-1.500 4.300-1.500 6 0" />
                <circle cx="9" cy="14.500" r="0.800" fill="currentColor" />
              </Draw>
              <Draw size={16} w={1.3}>
                <path d="M1.500 6.500v5H4l4.500 4V2.500L4 6.500ZM11 6.500c1.500 1.500 1.500 3.500 0 5" />
                <path d="M13 4c3 3 3 7 0 10" stroke="#a9acb6" />
              </Draw>
              <Draw size={18} w={1.2}>
                <path d="M5.500 4.500H15V14H2V9" />
                <path d="M6 6.500h7.500v6h-10V10Z" fill="currentColor" />
                <path d="M16.500 8v3" strokeWidth="2" />
                <path d="M5 1 2 6h2.500L3.500 9.500 7 5H4.500Z" fill="currentColor" stroke="none" />
              </Draw>
            </TrayGroup>
            <Clock dateTime="2023-07-20T15:19">
              <span>15:19</span>
              <span>2023-07-20</span>
            </Clock>
          </Tray>
        </Taskbar>
        <Watermark>@稀土掘金技术社区</Watermark>
      </Shell>
    </>
  );
}
